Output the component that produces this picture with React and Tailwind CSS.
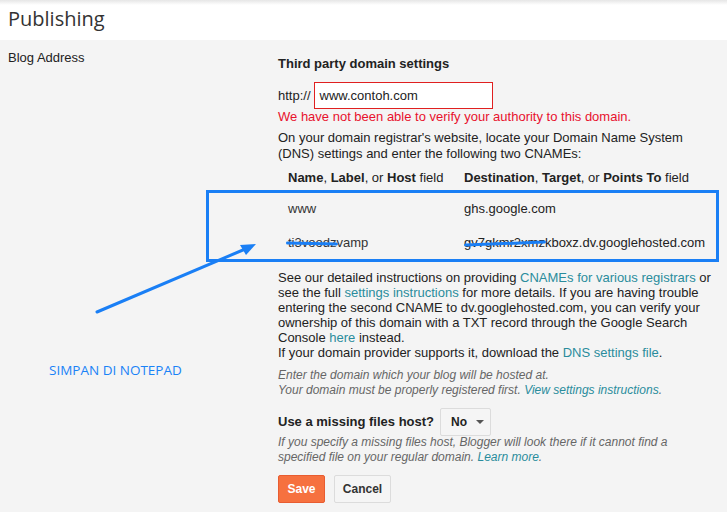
import React from 'react';

const arial = { fontFamily: '"Liberation Sans", Arial, sans-serif' };

function Scribble({ className }) {
    return <span className={`absolute h-[3px] rounded-full bg-[#1a7ff5] ${className}`} />;
}

export default function App() {
    return (
        <div className="relative h-[512px] w-[727px] overflow-hidden bg-[#f4f4f4] text-[13px] text-[#222]" style={arial}>
            <div className="relative h-[40px] bg-white">
                <div className="absolute inset-x-0 top-0 h-[5px] bg-gradient-to-b from-[#e6e6e6] to-white" />
                <h1 className="relative pl-[8px] pt-[5px] text-[20px] leading-[28px] text-[#333]" style={{ fontFamily: '"Open Sans", sans-serif' }}>
                    Publishing
                </h1>
            </div>

            <div className="flex">
                <div className="w-[278px] shrink-0 pl-[8px] pt-[10px] leading-[15px]">Blog Address</div>

                <div className="w-[440px] shrink-0 pt-[16px] leading-[16px]">
                    <h2 className="font-bold">Third party domain settings</h2>

                    <div className="mt-[10px] flex items-center gap-[3px]">
                        <span>http://</span>
                        <div className="flex h-[27px] w-[179px] items-center border border-[#e02020] bg-white px-[5px] text-[13px]">
                            www.contoh.com
                        </div>
                    </div>
                    <p className="text-[#e8112d]">We have not been able to verify your authority to this domain.</p>
                    <p className="mt-[5px]">
                        On your domain registrar's website, locate your Domain Name System (DNS) settings and enter the following two CNAMEs:
                    </p>

                    <table className="mt-[8px] border-collapse">
                        <thead>
                            <tr className="h-[16px]">
                                <th className="w-[186px] pl-[10px] text-left font-normal">
                                    <b>Name</b>, <b>Label</b>, or <b>Host</b> field
                                </th>
                                <th className="text-left font-normal">
                                    <b>Destination</b>, <b>Target</b>, or <b>Points To</b> field
                                </th>
                            </tr>
                        </thead>
                        <tbody>
                            <tr>
                                <td className="pl-[10px] pt-[15px] text-[#333]">www</td>
                                <td className="pt-[15px]">ghs.google.com</td>
                            </tr>
                            <tr>
                                <td className="pl-[10px] pt-[18px] text-[#333]">
                                    <span className="relative">
                                        ti3voodzvamp
                                        <Scribble className="left-[-2px] top-[7px] w-[52px] rotate-[1deg]" />
                                    </span>
                                </td>
                                <td className="pt-[18px]">
                                    <span className="relative">
                                        gv7gkmr2xmzkboxz.dv.googlehosted.com
                                        <Scribble className="left-[0px] top-[7px] w-[82px] -rotate-[2deg]" />
                                    </span>
                                </td>
                            </tr>
                        </tbody>
                    </table>

                    <p className="mt-[19px] leading-[15px]">
                        See our detailed instructions on providing <span className="text-[#2a8c9c]">CNAMEs for various registrars</span> or see the full{' '}
                        <span className="text-[#2a8c9c]">settings instructions</span> for more details. If you are having trouble entering the second CNAME to dv.googlehosted.com, you can verify your ownership of this domain with a TXT record through the Google Search Console{' '}
                        <span className="text-[#2a8c9c]">here</span> instead.
                        <br />
                        If your domain provider supports it, download the <span className="text-[#2a8c9c]">DNS settings file</span>.
                    </p>

                    <p className="mt-[8px] text-[12px] italic leading-[15px] text-[#666]">
                        Enter the domain which your blog will be hosted at.
                        <br />
                        Your domain must be properly registered first. <span className="text-[#2a8c9c]">View settings instructions</span>.
                    </p>

                    <div className="mt-[10px] flex items-center gap-[6px]">
                        <span className="font-bold">Use a missing files host?</span>
                        <div className="flex h-[28px] w-[51px] items-center gap-[9px] rounded-[2px] border border-[#dcdcdc] bg-[#f5f5f5] pl-[10px] text-[12px] font-bold">
                            No
                            <span className="h-0 w-0 border-x-[4px] border-t-[4px] border-x-transparent border-t-[#555]" />
                        </div>
                    </div>
                    <p className="mt-[-1px] text-[12px] italic leading-[15px] text-[#666]">
                        If you specify a missing files host, Blogger will look there if it cannot find a specified file on your regular domain.{' '}
                        <span className="text-[#2a8c9c]">Learn more</span>.
                    </p>

                    <div className="mt-[10px] flex gap-[9px]">
                        <button className="h-[28px] w-[47px] rounded-[2px] border border-[#e85c30] bg-[#f6713f] text-[12px] font-bold text-white">
                            Save
                        </button>
                        <button className="h-[28px] w-[57px] rounded-[2px] border border-[#dcdcdc] bg-[#f5f5f5] text-[12px] font-bold text-[#333]">
                            Cancel
                        </button>
                    </div>
                </div>
            </div>

            {/* annotation overlay */}
            <div className="absolute left-[206px] top-[190px] h-[72px] w-[513px] border-[3px] border-[#1a7ff5]" />
            <svg className="absolute left-0 top-0" width="727" height="512">
                <line x1="97" y1="312" x2="250" y2="247" stroke="#1a7ff5" strokeWidth="3" strokeLinecap="round" />
                <path d="M256 244 L240 245 L246 255 Z" fill="#1a7ff5" />
            </svg>
            <div className="absolute left-[49px] top-[360px] text-[13.5px] text-[#1a82f7]" style={{ fontFamily: '"Open Sans", sans-serif' }}>
                SIMPAN DI NOTEPAD
            </div>
        </div>
    );
}
